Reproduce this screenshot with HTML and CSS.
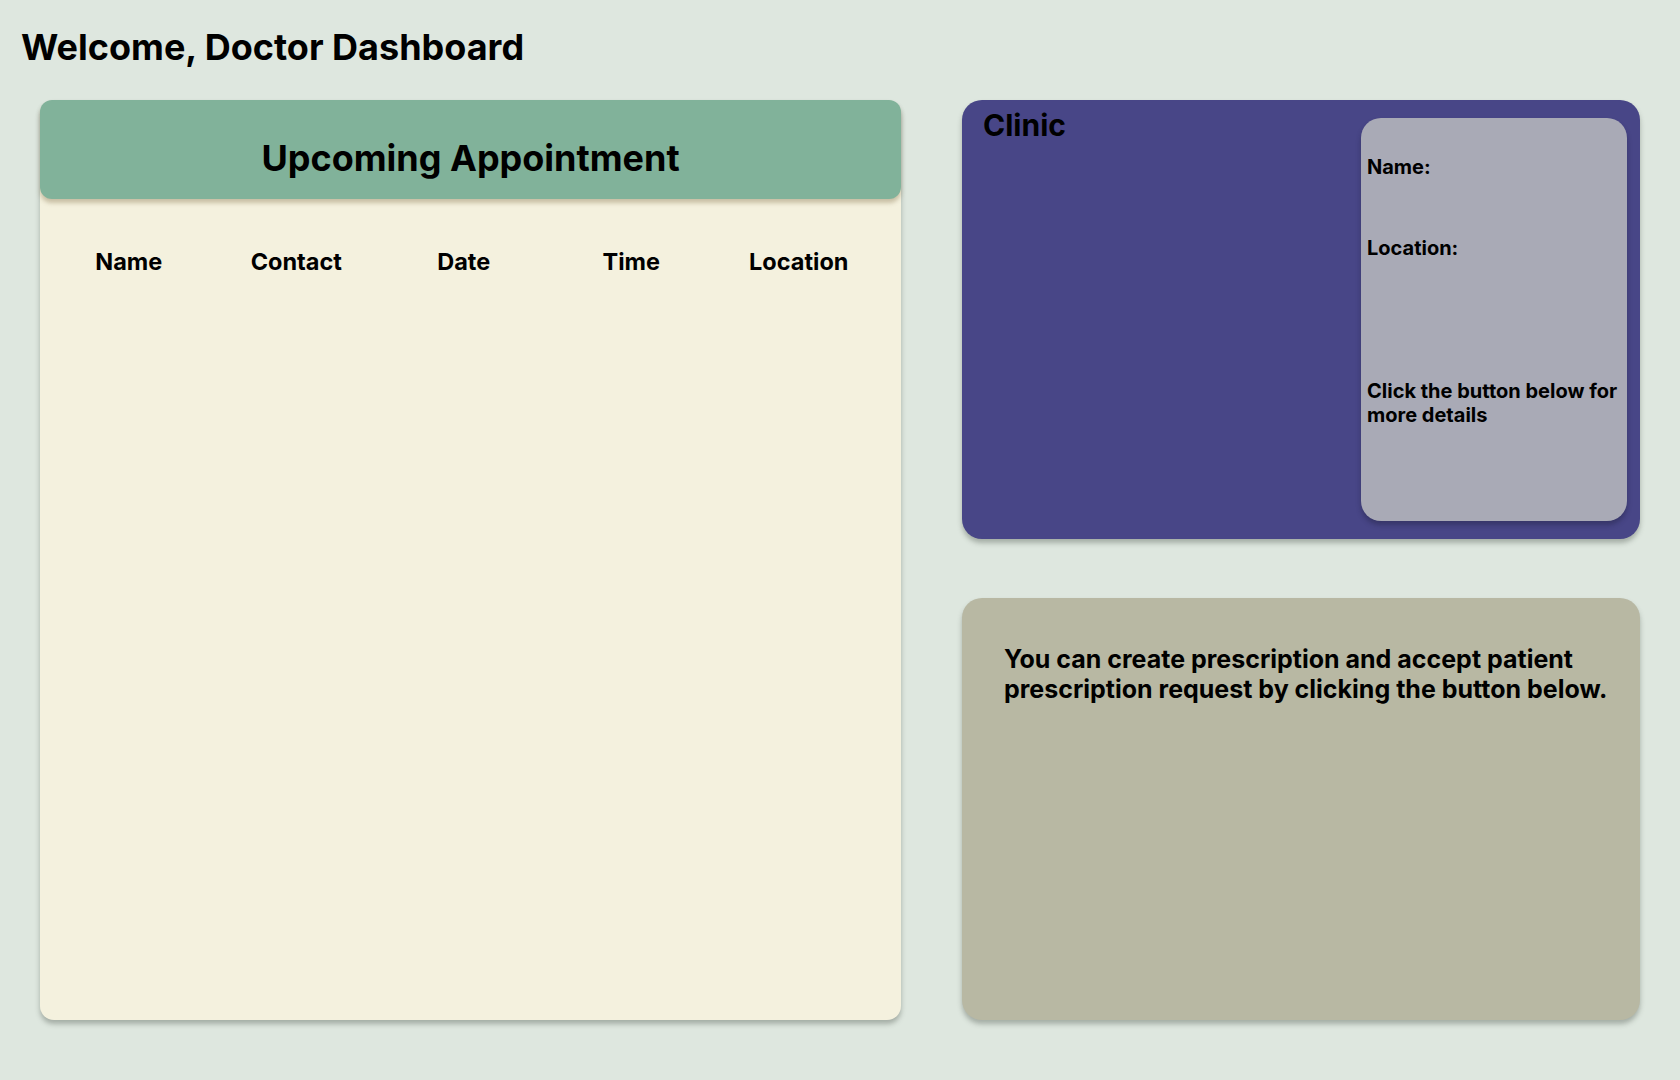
FILE: index.html
```html
<!DOCTYPE html>
<html lang="en">
<head>
<meta charset="utf-8">
<title>Doctor Dashboard</title>
<link rel="stylesheet" href="styles.css">
</head>
<body>
<header class="page-header">
  <h1 class="page-title">Welcome, Doctor Dashboard</h1>
</header>
<main class="dashboard">
  <section class="card appointments">
    <div class="appointments-head">
      <h2 class="appointments-title">Upcoming Appointment</h2>
    </div>
    <div class="appt-cols">
      <div class="appt-col">Name</div>
      <div class="appt-col">Contact</div>
      <div class="appt-col">Date</div>
      <div class="appt-col">Time</div>
      <div class="appt-col">Location</div>
    </div>
  </section>
  <div class="side">
    <section class="card clinic">
      <h2 class="clinic-title">Clinic</h2>
      <div class="clinic-panel">
        <p class="clinic-field clinic-name">Name:</p>
        <p class="clinic-field clinic-location">Location:</p>
        <p class="clinic-field clinic-note">Click the button below for more details</p>
      </div>
    </section>
    <section class="card prescription">
      <p class="prescription-text">You can create prescription and accept patient prescription request by clicking the button below.</p>
    </section>
  </div>
</main>
</body>
</html>
```

FILE: styles.css
```css
* { box-sizing: border-box; }

html, body {
  margin: 0;
  padding: 0;
}

body {
  background: #dee7df;
  font-family: "Inter", "Noto Sans", sans-serif;
  color: #000;
  width: 1680px;
  height: 1080px;
  overflow: hidden;
}

.page-header {
  padding: 25px 0 0 21px;
  height: 100px;
}

.page-title {
  margin: 0;
  font-size: 36px;
  font-weight: 700;
  line-height: 44px;
}

.dashboard {
  display: grid;
  grid-template-columns: 861px 678px;
  column-gap: 61px;
  padding: 0 0 0 40px;
}

.card {
  box-shadow: 0 4px 5px rgba(60, 70, 60, 0.35);
}

.appointments {
  background: #f4f1de;
  border-radius: 14px;
  height: 920px;
}

.appointments-head {
  background: #81b29a;
  border-radius: 12px;
  height: 99px;
  padding-top: 36px;
  box-shadow: 0 4px 4px rgba(120, 100, 60, 0.35);
}

.appointments-title {
  margin: 0;
  text-align: center;
  font-size: 36px;
  font-weight: 700;
  line-height: 44px;
}

.appt-cols {
  display: grid;
  grid-template-columns: repeat(5, 167.5px);
  padding: 48px 0 0 5px;
}

.appt-col {
  text-align: center;
  font-size: 23.5px;
  font-weight: 700;
  line-height: 29px;
}

.side {
  display: flex;
  flex-direction: column;
  gap: 59px;
}

.clinic {
  background: #484687;
  border-radius: 20px;
  height: 439px;
  display: flex;
  justify-content: space-between;
  align-items: flex-start;
  padding: 7px 13px 18px 21px;
}

.clinic-title {
  margin: 0;
  font-size: 30px;
  font-weight: 700;
  line-height: 36px;
}

.clinic-panel {
  width: 266px;
  height: 403px;
  margin-top: 11px;
  background: #a9aab6;
  border-radius: 20px;
  padding: 37px 4px 0 6px;
  box-shadow: 0 4px 5px rgba(30, 30, 60, 0.4);
}

.clinic-field {
  margin: 0;
  font-size: 20px;
  font-weight: 700;
  line-height: 24px;
}

.clinic-location {
  margin-top: 57px;
}

.clinic-note {
  margin-top: 119px;
}

.prescription {
  background: #b8b8a3;
  border-radius: 20px;
  height: 422px;
  padding: 46px 20px 0 42px;
}

.prescription-text {
  margin: 0;
  font-size: 25px;
  font-weight: 700;
  line-height: 30px;
}
```
